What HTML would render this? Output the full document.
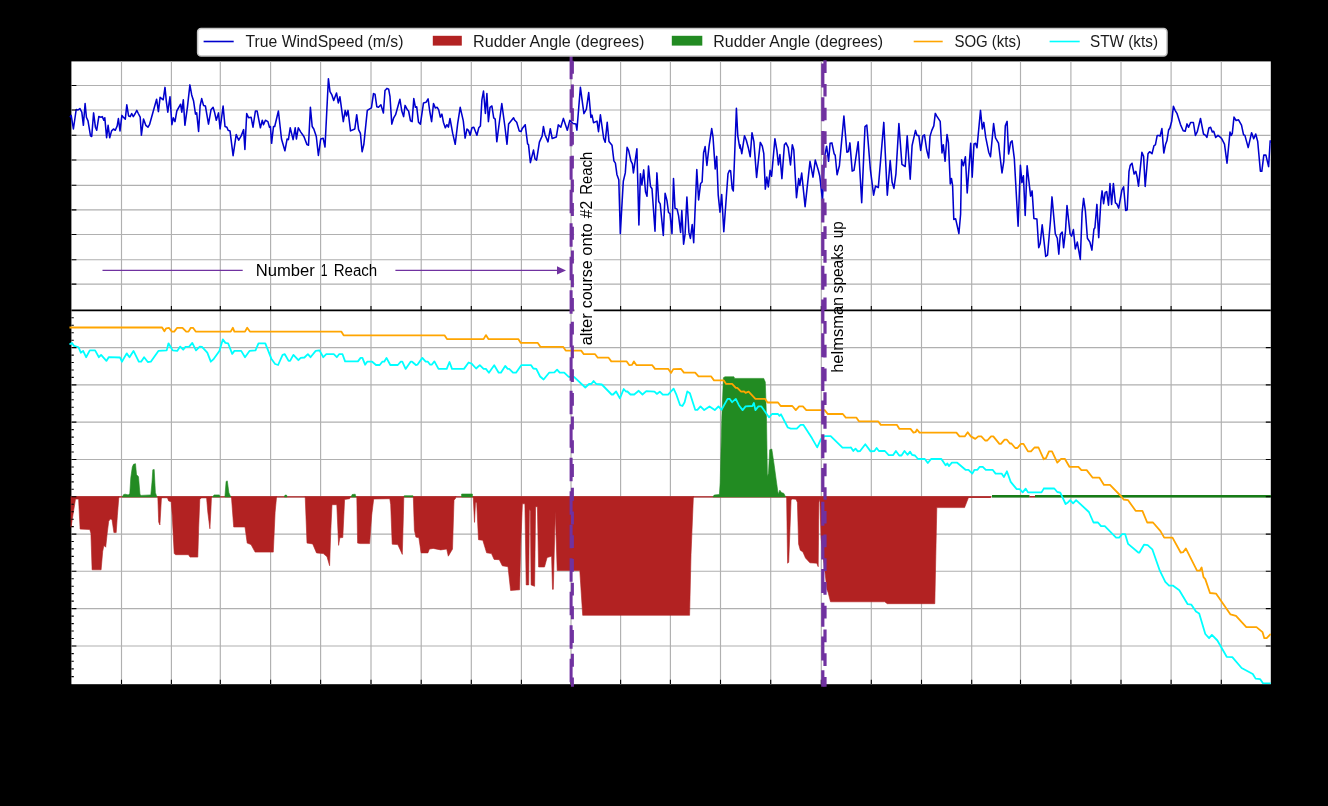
<!DOCTYPE html>
<html><head><meta charset="utf-8"><title>chart</title>
<style>
html,body{margin:0;padding:0;background:#000;}
body{width:1328px;height:806px;overflow:hidden;position:relative;font-family:"Liberation Sans",sans-serif;}
svg{position:absolute;left:0;top:0;}
text{font-family:"Liberation Sans",sans-serif;}
</style></head><body>
<svg width="1328" height="806" viewBox="0 0 1328 806">
<rect x="0" y="0" width="1328" height="806" fill="#000"/>
<filter id="soft" x="0" y="0" width="1328" height="806" filterUnits="userSpaceOnUse"><feGaussianBlur stdDeviation="0.5"/></filter>
<g filter="url(#soft)">
<rect x="0" y="0" width="1328" height="806" fill="#000"/>
<rect x="71.4" y="61.4" width="1199.4" height="622.8" fill="#fff"/>
<path d="M121.5 61.4V684.2M171.4 61.4V684.2M220.3 61.4V684.2M270.6 61.4V684.2M320.6 61.4V684.2M371 61.4V684.2M421.2 61.4V684.2M471.3 61.4V684.2M521.4 61.4V684.2M571 61.4V684.2M620.6 61.4V684.2M670.4 61.4V684.2M720.5 61.4V684.2M770.7 61.4V684.2M821.3 61.4V684.2M871.3 61.4V684.2M921.5 61.4V684.2M971.7 61.4V684.2M1020.5 61.4V684.2M1070.9 61.4V684.2M1121 61.4V684.2M1171.1 61.4V684.2M1221.3 61.4V684.2M71.4 85.5H1270.8M71.4 110H1270.8M71.4 135.3H1270.8M71.4 160H1270.8M71.4 185.3H1270.8M71.4 209.9H1270.8M71.4 234.5H1270.8M71.4 259.7H1270.8M71.4 284.1H1270.8M71.4 347.6H1270.8M71.4 384.9H1270.8M71.4 422.1H1270.8M71.4 459.5H1270.8M71.4 496.8H1270.8M71.4 534.1H1270.8M71.4 571.2H1270.8M71.4 608.6H1270.8M71.4 646H1270.8" stroke="#b0b0b0" stroke-width="1.15" fill="none"/>
<g id="data" fill="none" stroke-linejoin="round" stroke-linecap="butt">
<clipPath id="cp"><rect x="69" y="61.4" width="1201.9" height="622.8"/></clipPath>
<g clip-path="url(#cp)">
<path d="M70 117.2L71.2 115.4L73.4 129L76.2 109.5L78 110L79.9 108.5L81.8 112.2L83.4 125.3L85.1 103.5L86.4 117.2L88 120.9L90.5 135.9L91.7 136.5L93.6 112.9L95.4 127.2L96.7 130.3L98.8 116.6L101 117.2L102.3 116.6L103.8 120.3L104.8 117.8L106.6 137.7L108.1 125.3L109.7 137.7L111.6 130.9L113.5 129L115.3 130.3L117.2 125.9L118.4 118.5L120 130.9L121.9 115.4L123.4 117.2L125.3 119.1L126.8 104.8L128.6 116L130.2 116.6L131.7 113.5L133.3 116.6L135.2 113.5L136.8 110.4L138.3 113.5L140.2 117.2L141.4 135.2L143.5 119.1L145.8 125.3L148 127.2L149.5 124.7L156.6 99.2L158.4 111.6L160.1 97.3L163.2 99.8L165 87.4L166.3 101.1L167.8 112.2L170 96.7L171.9 124.7L173.3 117.8L175 121.6L176.8 111L180.6 104.2L181.8 112.2L183.3 99.8L184.9 125.3L187.4 107.3L189.9 84.9L191.7 94.9L193.6 101.1L195.5 114.1L196.7 112.9L198.6 131.5L200.1 106L201.7 98.6L203.5 105.4L205.4 106L208.5 124.1L211 109.8L213.1 107.3L214.7 112.9L216.3 120.3L218.5 112.9L220.1 129L223.1 106L225 126.5L226.9 127.2L228.1 130.3L230 130.9L233.1 155.7L236.2 134.6L238.7 140.2L241.2 135.9L243.6 129.6L244.9 149.5L246.7 113.5L248.6 117.8L251.1 117.2L253 127.2L255.4 111L257.1 111L260.4 127.8L262.3 120.3L263.5 124.7L265.4 120.3L267.9 121.6L269.5 127.2L270.4 126.5L271.6 143.3L273.5 126.5L274.7 126.5L278.4 111L281.5 139L284.9 150.8L287.1 139L288.4 139.6L290.2 127.8L293.1 139.6L295.2 127.8L296.4 139L298.3 127.8L300.8 132.1L303.9 136.5L307 144.6L308.5 145.2L310.4 107.3L312.2 126.5L313.8 129L316.3 136.5L318.4 155.5L320.7 139L323.2 138.3L325 147L328.4 78.7L330 91.7L331.9 94.9L333.7 100.4L336.5 93L338.3 102.9L339.9 96.7L343.3 121.6L345.2 110.4L346.5 116L348 110.4L350.5 130.9L354.8 129L356.7 114.7L358.6 129.6L360.4 133.4L362.1 151.8L363.8 144.6L367.3 110.4L371.4 107.9L373.5 93.6L375 94.2L376.8 106.7L378.5 107.3L380.9 104.8L383.4 112.9L385 90.5L386.9 88.4L388.7 89.3L390 96.7L391.8 124.1L393.7 117.8L395.6 114.7L399.9 99.2L401.8 111L403.6 116.6L405.1 105.4L407.4 109.8L408.6 111L410.5 120.9L412.1 121.6L413.8 98.6L415.4 107.3L416.7 106.7L418.5 122.2L420.4 124.1L423.5 102.9L426 102.3L428.1 98.8L429.7 111L431.6 121.6L433.5 103.5L435.3 107.9L437.2 107.3L438.7 109.8L440.3 117.2L441.9 114.1L443.4 122.2L445.3 127.8L446.9 124.7L448.4 127.2L450 118.5L452.7 133.4L455.2 144.3L457.7 123.4L460.2 107.3L463.3 120.9L465.1 138.1L467 129L468.5 130.3L470.1 135.2L472 127.8L473.8 127.2L476.9 135.2L478.8 127.8L480.4 125.9L481.9 99.8L483.5 91.1L485.4 113.5L486.9 93.6L488.4 121.6L490 107.3L491.9 106L493.7 117.8L495.2 119.1L496.8 141.8L501.8 103.5L504.9 126.5L507 144.3L508.6 124.1L513.6 117.8L514.8 120.3L516.7 122.2L519.2 130.9L521.1 131.5L522.3 128.4L525.2 124.7L527.6 143.9L528.5 144.6L530.4 162.6L533.5 150.1L535 158.8L536.6 160.1L539.4 142.1L542.2 135.9L543.4 126.5L545 134.7L548 141.9L550.3 128.7L552.2 138.5L556.3 137L558.3 124.9L560.8 127.2L563.4 118.4L567.3 130.2L569.8 120.4L572.9 123.4L575.9 123.9L576.9 130.2L580.4 87.3L583.9 113.6L586.4 109.1L588.7 92.5L590.9 117.4L592 115.1L593.5 122.7L597 121.1L598.5 131.7L600.4 114.8L603.7 138.5L605.2 142.2L607.2 122.3L609 141.5L612 145.2L613.9 160.9L615.4 163.1L616.9 174.4L618.8 179.7L620.3 233.6L623.3 181.2L625.3 172.9L627.1 147.3L628.6 150.3L630.9 160.9L632.4 163.9L633.4 172.9L636.9 148.8L638.9 224.9L640.4 173.7L641.9 185L643.7 169.9L645.5 191.7L647 196.3L648.5 166.1L650.5 186.5L652 188.7L655 231.2L656.9 172.9L658.7 201.5L660.2 203.8L663.3 235.4L665.1 193.3L667 200.8L668.5 212.5L670 213.6L672 233.6L673.5 178.5L675 208.3L677.1 209.1L678.6 215.8L680.6 232.4L681.8 210.6L683.6 244.2L685.1 233.9L686.9 197L688.9 232.4L690.4 238.4L692.2 224.6L693.7 242.7L696.8 169.5L698.6 200L700.6 183.5L702.1 182L703.6 152.6L705.1 146.6L706.9 165.4L709.2 145.1L711.7 128.6L713 136.8L715.2 168.9L716.7 156.4L718.2 194.8L720 212.1L721.7 194.5L723.8 231.7L728 173.7L729.5 170.4L730.6 170.7L732.2 188.7L733.3 191L736.4 108.3L737.8 136L739.3 145.1L739.9 148.1L740 144.7L741.8 153.7L744.5 135.7L746.3 140.2L748.3 147.7L750.2 156.7L752 132.7L753.9 141.7L756.6 177.5L760.3 142.4L762.3 146.2L763.8 153.7L765.3 189.1L766.8 177.1L768.3 186.9L770.1 170.3L771.6 176.3L774.9 138.7L776.9 150.7L778.4 165L779.9 154.5L781.9 178.6L784.4 144.7L785.9 142.9L788.2 147.7L790.5 165L792.3 144.7L793.8 150L796.5 197.7L798.7 178.6L799.8 185.4L801.7 173L805.1 206.7L810 161.3L813 177.1L815.3 160.1L818.3 170.3L819.8 176.3L822.5 200.4L824.3 158.3L826.6 146.2L828.6 161.3L830.1 143.2L831.9 142.9L834.1 153.7L835.2 155.2L837.1 174.8L839.4 165.8L843.9 116.1L846.9 152.2L848.4 151.5L849.9 142.9L852.2 171.1L854 170.3L858.2 141.7L861.7 202.7L865 126.6L866.8 125.1L870.3 168.8L873.6 195.2L875.5 186.1L878.3 187.6L883.8 122.4L887.3 195.2L890.2 160.5L892.1 182.3L893.9 188.4L895.9 174.1L898.9 123.6L901.9 164.3L905.2 166.5L907.2 135.7L910.2 179.3L912.1 145.5L915.5 130.4L917 135.4L918.8 135.4L920.7 150.4L923 135.7L924.5 134.9L926.7 150L928.7 158L930 136.4L931.8 130.4L933.8 125.9L935.3 113.4L936.8 116.1L940.2 121.4L942 153L943.3 144.7L945.1 161.3L947 134.5L948.4 142.4L950.3 183.9L951.5 178.6L952.6 185.4L953.8 219.5L955.6 218.7L958.9 233.5L960.6 214.2L961.6 159.8L963.4 165.8L965.4 156.7L967.2 192.9L970.7 143.2L972.2 177.1L974 143.9L975.6 143.2L977 147.7L980.5 110.4L982.3 128.9L983.8 122.4L985.7 137.2L988.7 152.2L990.5 156.7L993.6 123.6L995.5 137.9L998.5 143.2L1002 173L1003.8 161.3L1005.3 125.9L1007.1 121.4L1008.6 154L1010.6 142.4L1012.1 140.9L1014.3 158.3L1018.1 226.3L1020.4 165.3L1021.9 182.6L1023.4 175.8L1025.2 215.4L1027.1 165.7L1030.6 196.1L1032.1 190.9L1033.9 218.4L1036.9 219L1038.7 247.7L1040.2 243.6L1042.2 224.8L1045.7 256.4L1047.5 255.2L1050.5 220.2L1052 196.9L1055.3 233.8L1057.3 238.3L1058.8 254.1L1060.3 234.5L1062.2 232L1063.6 247.7L1065.5 230.8L1067 205.5L1070.1 233.8L1071.6 236.1L1073.4 229.6L1075.3 248.9L1077.3 242.1L1080.3 259.4L1082.1 212.7L1083.6 198.4L1085.4 211.2L1087.4 238.3L1089.9 242.1L1091.9 250.1L1093.9 229.3L1094.9 227.8L1096.9 204.4L1098.7 237.6L1100.9 200.7L1102.1 190.9L1103.6 203.7L1105.2 192.4L1106.7 191.6L1108.5 205.2L1110 183.5L1111.6 204.5L1113.4 183.5L1115.4 202.9L1116.8 203.9L1118.7 208.2L1121.9 190L1123.6 186.8L1125.7 210.5L1127.2 209.7L1129 171.3L1130.3 165.2L1132 163.2L1134.1 174L1135.8 171.3L1137.1 176.7L1138.5 186.2L1141.9 152.3L1143.6 156.4L1145.2 186.5L1148 153.7L1149.6 151.7L1152 153.7L1154 145.6L1155.4 144.9L1157.2 135.4L1158.8 135.4L1160.1 136.1L1161.9 128.6L1163.8 153L1165.6 144.2L1166.9 140.8L1168.6 130L1169.9 128L1171.7 121.2L1173.4 106.3L1175.1 110.3L1177.1 113.7L1180.5 124.6L1183.2 130.7L1185.2 131.3L1187 123.9L1188.6 127.3L1190.6 122.5L1193.4 122.5L1195.4 135.4L1197.4 131.3L1200.5 118.5L1203.5 134L1205.6 135.4L1206.9 137.4L1208.9 128L1210.6 127.3L1212.3 132L1213.7 131.3L1215.7 137.4L1218 135.4L1219.8 136.8L1221.8 138.8L1224.5 144.2L1227 163.2L1230 132L1231.3 135.4L1232.3 133.4L1234 117.1L1236.1 120.5L1238.5 119.8L1241.5 125.2L1243.5 134.7L1244.9 135.4L1248.2 147.6L1251.6 132.7L1253.7 138.8L1255.7 134L1257.7 141.5L1260.4 171.3L1261.8 171.3L1263.8 155.1L1265.9 155.1L1268.6 166.6L1270.2 140.8L1271 142.9" stroke="#0000cd" stroke-width="1.55"/>
<path d="M71.4 496.9H990.7" stroke="#b22222" stroke-width="1.2"/>
<path d="M71 496.9L71 496.4L71 527.3L75.5 499.1L78.6 499.1L80.1 529.1L89.8 529.5L90.9 533.3L92.1 569.8L101.1 569.8L102.7 551.4L103.9 545.4L105.7 547.2L107.2 533.3L108.7 521.3L110.2 519L112 519.5L113.9 532.6L116.2 532.6L117.4 515.2L118.9 496.4L118.9 496.9ZM157.8 496.9L157.8 496.4L158.7 522L159.9 525L161.4 498.7L162.1 497.8L167.4 497.8L168.6 500.9L171.2 501.7L172.2 515.2L174.2 553.6L175.7 554.7L188.5 554.7L190 557.1L197.8 557.1L198.7 527.3L199.8 499.4L201.3 497.9L206.6 497.9L207.8 512.2L209.9 528.8L210.8 512.2L211.5 496.4L211.5 496.9ZM231.4 496.9L231.4 496.4L233.7 527L245 527L247.2 543.1L251 544.6L255.1 552.1L273.3 552.1L275.1 512.2L276.6 496.4L276.6 496.9ZM305.2 496.9L305.2 496.4L307 543.1L312.7 543.9L316.5 552.9L323.3 553.6L327 556.7L329.6 565.7L330.8 530.3L332 504.7L336.8 504.7L338.6 545.4L339.8 537.8L342.8 537.5L344.6 499.4L349.6 498.7L350.4 496.4L350.4 496.9ZM356.8 496.9L356.8 496.4L357.6 543.1L360.2 543.6L369.6 543.6L371.7 515.2L373.7 499L389.8 498.7L390.7 504.7L392.2 544.2L397.8 544.6L402.3 554.4L403.4 515.2L403.8 496.4L403.8 496.9ZM413.3 496.9L413.3 496.4L414.4 530.3L415.9 537.1L418.9 537.8L421.1 552.9L427.9 552.9L429.4 549.1L433.2 548.4L440.7 549.9L446.7 549.1L448.3 556.2L452.5 549.1L454 500.2L455.8 497.9L455 497.5L456 496.3L456 496.9ZM473.2 496.9L473.2 496.3L474.5 522.4L475.5 502.4L476.7 502.4L478.5 539.7L482.8 540.3L486.6 552.8L491.5 553.6L494.1 559.4L499.3 559.7L502.3 565.8L508 566.7L510.6 590.5L519.6 589.8L521 537.1L522.4 503.8L524.9 503.8L526.2 584.9L528.7 584.9L529.4 509.3L530.4 511.1L531.1 584.9L534.6 586.3L535.6 506.7L537.4 506.7L538.6 567L544.5 567L547.1 557.6L551.6 556.2L552.5 589.3L553.3 589.3L555.3 511.1L557.2 570.5L579.8 570.5L582.7 615.3L689.6 615.3L691 554.5L693.4 496.3L693.4 496.9ZM786.6 496.9L786.6 496.3L787.6 563.2L788.7 562.3L791.1 499.8L792.5 498.9L796 499.2L797.4 502.4L798.6 544.1L800.3 550.2L802.9 551.9L805.5 558L809.9 562.8L816.8 563.2L818.2 566.7L818.9 502.4L819.9 498.9L821 537.1L826.9 589.3L828.2 592.7L830.5 601.8L884.7 601.8L887.3 603.7L934.8 603.7L936.8 507.6L964.6 507.6L968.5 497.5L990.7 497.5L990.7 496.3L990.7 496.9Z" fill="#b22222" stroke="#b22222" stroke-width="0.6"/>
<path d="M122.2 496.9L122.2 496.9L123.7 494.5L125.2 494.2L128.3 494.9L129.8 493.4L130.8 477.6L132.3 467L133.5 464.3L135.5 463.7L136.5 474.6L138.5 476.8L140 494.5L141.1 495.4L150.8 494.9L152 482.1L152.8 469.8L154.2 469.5L155.4 492.7L156.9 496.9L156.9 496.9ZM212.6 496.9L212.6 496.9L214.1 494.9L219.4 494.9L220.1 496.9L220.1 496.9ZM224.9 496.9L224.9 496.9L226.1 481.4L227.3 480.9L228.9 492.7L230.7 496.9L230.7 496.9ZM284.4 496.9L284.4 496.9L285 495.1L286.5 495.1L287.1 496.9L287.1 496.9ZM351.1 496.9L351.1 496.9L352.2 494.5L355.2 494.2L355.9 496.9L355.9 496.9ZM404.3 496.9L404.3 496.9L404.3 495.7L412.9 495.7L412.9 496.9L412.9 496.9ZM461.6 496.9L461.6 496.6L461.6 494L472.4 494L472.4 496.6L472.4 496.9ZM712.9 496.9L712.9 496.9L714.2 495L719.4 494.5L720.2 482.9L721.8 418.4L723.4 377.7L725 376.8L733.9 376.8L734.7 378.4L763.7 378.4L765.3 382.1L766.5 418.4L767.4 476.5L768.5 473.2L769.7 449.8L771.8 449L774.2 465.2L776.6 482.9L778.2 494.2L779.8 490.2L781.5 492.6L783.9 493.4L785.5 496.9L785.5 496.9Z" fill="#228b22" stroke="#228b22" stroke-width="0.6"/>
<path d="M992 496.2H1029.5M1035 496.2H1271" stroke="#127c12" stroke-width="2.6"/>
<path d="M1029.5 496.8H1035" stroke="#b22222" stroke-width="1.6"/>
<path d="M69.5 327.5L162.1 327.5L164.4 331.3L166.2 328.3L168.9 327.8L171.9 331.6L174.2 331.6L177.2 327.8L182.5 327.8L186.2 331.6L188.5 331.6L190.8 327.8L193 327.8L195.7 331.6L230.7 331.6L232.9 327.8L234.4 331.6L245 331.6L247.2 327.8L249.9 331.6L265.3 331.6L341.3 331.6L343.6 335.3L444.5 335.3L447 339.1L460.3 339.1L483.6 339.1L485.9 335.1L488.4 339.1L518.3 339.1L520.8 342.9L537.8 342.9L540.4 346.8L563.1 346.8L565.7 350.6L581.2 350.6L583.8 354.2L595.1 354.2L597.8 357.7L608.6 357.7L611.3 361.4L626.7 361.4L629.4 365.2L632 364.9L633.9 361.4L636.5 365.2L652.3 365.2L655 368.9L655.3 368.8L668.1 368.8L671.1 372.9L673.3 369.1L680.9 368.8L683.9 372.6L695.2 372.6L698.5 376.3L711 376.3L714 380.4L723.8 380.4L726.1 383.9L732.1 383.9L735.8 387.9L737.3 387.9L741.1 391.7L744.1 391.4L745.6 392.9L748.6 391.7L755.4 398.9L765.2 398.9L767.5 402.5L778 402.5L780.7 406L792.3 406L795.8 410.1L799.1 406.4L802.9 406.4L806.3 410.1L824.7 410.1L827.7 414L842.8 414L845.8 417.6L850 417.6L856.3 417.6L858.9 421.3L878.1 421.3L880.8 424.9L897 424.9L899.5 428.9L910.5 428.9L913.5 432.6L915.5 432.2L917 429.5L919.5 432.6L956.4 432.6L959.5 436.4L964.7 436.4L967.7 432.2L970.8 436.4L975.3 438.9L978.3 436.4L981.3 436.4L985.1 440.5L987.3 440.5L991.1 436.4L993.3 436.4L999.4 443.9L1000.9 443.9L1004.6 439.7L1006.9 439.7L1009.9 443.5L1011.4 443.5L1015.2 448L1017.4 448L1020.9 443.9L1023.5 443.9L1028 451.4L1031 451.4L1034.5 447.5L1038.5 447.5L1043.8 459.3L1043.8 458.8L1046 458.1L1049 451.3L1052 451.3L1057.3 462.6L1061.1 458.8L1064.8 458.8L1069.4 466.8L1078.4 466.8L1081.4 470.1L1086.7 470.1L1092.7 477.7L1099.5 477.7L1104 484.9L1110 484.9L1121.3 496.5L1123.6 499.5L1128.1 500.2L1135.6 510.8L1142.4 510.8L1147.2 522.5L1153 522.5L1160.5 531.1L1164.2 537.6L1172.5 537.6L1180.8 552.7L1183.1 552.2L1185.8 548.4L1197 570.7L1199.8 570.7L1201.6 567.5L1203.5 577.2L1205.3 579.1L1210 593L1216 593.6L1230.5 614.4L1236 615.9L1246.3 627.1L1256.5 627.1L1262.5 632.1L1264.3 638.2L1266.7 638.2L1270.8 634" stroke="#ffa500" stroke-width="1.8"/>
<path d="M69.5 344.4L71.8 342.9L74 345.9L78.6 347.4L80.8 352.7L83.1 350.9L86.1 357.2L89.8 350.4L95.1 350.4L98.9 357.2L101.1 354.9L106.4 360.9L108.7 357.2L120 357.5L121.9 361.7L126.7 353.4L129.5 357.2L133.5 350.9L138.8 361.7L141.1 361.7L144.1 357.2L147.8 362L150.8 361.7L158.4 350.9L166.7 350.4L168.5 343.3L172.7 350.4L177.2 350.9L180.2 346.6L183.2 349.7L185.5 346.9L189.2 346.6L192.3 342.9L196 350.4L199.8 346.6L202 346.9L207.3 352.7L210.8 361.7L213.3 359.4L219.4 350.9L222.8 339.4L225.4 342.9L228.1 343.3L232.2 353.9L234.4 350.9L241.2 350.9L245 357.2L249.5 350.9L255.5 350.4L258.5 343.3L265.3 343.3L267.5 348.9L271.3 358.7L275.1 364L278.1 365L282.6 354.9L284.8 354.2L288.6 360.9L290.1 360.9L293.4 354.9L298.4 360.2L300.7 357.9L304.4 357.5L307.9 354.2L310.5 357.2L315.7 350.9L319.5 350.4L323.3 357.2L326.3 354.2L333.8 354.2L336.8 357.2L339.1 354.2L342.5 354.2L345.1 361.4L357.9 361.4L360.6 357.9L362.4 357.9L365.1 364.7L367.2 361.7L372.2 361.7L376 365L379.7 365L382.3 361.7L384.2 361.7L386.5 357.9L390.3 365L397.8 365L400.8 361.7L402.3 361.7L405.6 368.9L410.6 361.7L412.1 361.7L415.9 365L417.4 364.7L422.3 357.9L425.7 361.7L427.9 361.7L430.2 364.7L431.7 364.7L434.4 361.4L438.5 368.9L446.7 368.9L449.5 362L452 368.9L456.5 368.9L464 368.9L468.6 362.5L471.6 363.7L476.1 368.5L479.8 365.2L483.6 368.9L485.9 368.9L488.9 372.7L494.2 365.2L498.7 372.7L500.9 372.7L505.2 365.9L507.7 368.9L509.2 368.9L513 372.7L516 372.7L521.3 365.2L531.1 365.2L533.3 368.5L536.3 368.9L540.1 376.5L543.6 379.5L549.1 372.7L554.4 372.4L557.1 369.7L559.7 372.7L564.2 372.7L568.7 376.9L574 376.9L585.3 387.5L589 384L591.3 384L593.6 381L596.3 384L601.8 384.5L611.6 394.5L613.1 394.5L616.1 391.5L619.9 398.3L623.7 389L625.9 391.5L627.4 391.5L630.5 394.5L634.2 394.5L638.7 390.8L642.5 394.5L646.3 391.1L654.5 391.7L656.8 393.9L659.8 391.7L662.8 394.7L668.1 394.7L673.6 388.7L676.4 394.7L680.1 405.2L682.4 406L684.6 402.2L687.3 391.4L689.9 393.2L695.2 409.8L697.4 409.8L700.5 406.4L704.2 410.1L709.5 406.4L714.8 410.1L718.5 406.4L721.5 409.8L727.6 398.9L729.8 398.9L732.1 402.2L735.8 398.9L738.9 405.2L742.6 410.1L745.6 406.4L752.4 406L753.9 403L755.4 410.1L758.4 406.4L761.4 406.4L769 417.3L772 414L778 414L779.5 415.8L781 414.3L787.8 427.5L790.8 428.6L796.8 428.6L800.6 424.8L803.3 424.8L811.9 438.1L817.2 447.4L820.9 439.1L824.7 436.1L830.7 436.1L842.5 447.7L850 447.7L851 447.5L853.3 451L855.5 448.7L857.8 451.4L860.1 451L865.3 444.2L870.6 451.4L874.4 451L876.6 448L878.9 451L884.9 451L888.7 455.1L893.2 455.1L895.9 451L899.2 455.5L901.5 455.5L904.5 451L907.5 454.8L910.1 451.7L912 454.8L915 455.5L918 459L924.8 459L927.8 463L931.1 459L941.4 459L945.6 465.3L947.4 463.5L948.9 466.1L951.9 462.7L957.2 462.7L965.5 469.8L968.5 469.8L972.3 473.6L974.5 469.8L977.5 469.8L979.8 466.8L982.8 466.8L985.8 469.8L992.6 469.8L995.6 473.6L1001.6 473.6L1003.9 477L1006.9 471.3L1010.7 481.9L1016.7 489.1L1019.7 489.1L1022.7 492.4L1025.7 488.6L1028 492.4L1041.5 492.4L1043.8 488.6L1043.8 488.5L1054.3 488.5L1057.3 492L1060.3 492.7L1065.6 504L1067.9 502.5L1070.1 500.2L1073.1 503.3L1076.1 500.2L1088.9 512L1093.5 522.5L1098 522.5L1101 526.1L1104.8 526.1L1116.1 537.6L1119.1 537.6L1122.1 534.1L1125.1 534.1L1128.1 543.9L1138.6 552.7L1139.3 552.7L1144 544.7L1147.7 545.2L1152.3 549.3L1159.8 570.7L1165.3 581.9L1169.1 585.6L1172.8 585.6L1179.3 590.2L1187.7 604.2L1191.4 604.7L1196 611.6L1199.2 613.5L1205.3 634L1209.1 638.2L1211.9 634.9L1217.4 640.5L1226.7 656.8L1232.3 657.2L1241.6 668L1252.8 674L1255.6 678.6L1260.2 679.2L1263 683.3L1270.8 683.3" stroke="#00ffff" stroke-width="1.8"/>
</g></g>
<path d="M71.4 85.5h5M71.4 110h5M71.4 135.3h5M71.4 160h5M71.4 185.3h5M71.4 209.9h5M71.4 234.5h5M71.4 259.7h5M71.4 284.1h5M71.4 347.6h5M1270.8 347.6h-5M71.4 384.9h5M1270.8 384.9h-5M71.4 422.1h5M1270.8 422.1h-5M71.4 459.5h5M1270.8 459.5h-5M71.4 496.8h5M1270.8 496.8h-5M71.4 534.1h5M1270.8 534.1h-5M71.4 571.2h5M1270.8 571.2h-5M71.4 608.6h5M1270.8 608.6h-5M71.4 646h5M1270.8 646h-5M71.4 317.8h2.4M71.4 325.3h2.4M71.4 332.7h2.4M71.4 340.2h2.4M71.4 355.1h2.4M71.4 362.5h2.4M71.4 370h2.4M71.4 377.4h2.4M71.4 392.3h2.4M71.4 399.8h2.4M71.4 407.2h2.4M71.4 414.7h2.4M71.4 429.6h2.4M71.4 437.1h2.4M71.4 444.5h2.4M71.4 452h2.4M71.4 467h2.4M71.4 474.4h2.4M71.4 481.9h2.4M71.4 489.3h2.4M71.4 504.3h2.4M71.4 511.7h2.4M71.4 519.2h2.4M71.4 526.6h2.4M71.4 541.5h2.4M71.4 548.9h2.4M71.4 556.4h2.4M71.4 563.8h2.4M71.4 578.7h2.4M71.4 586.2h2.4M71.4 593.6h2.4M71.4 601.1h2.4M71.4 616.1h2.4M71.4 623.6h2.4M71.4 631h2.4M71.4 638.5h2.4M71.4 653.6h2.4M71.4 661.3h2.4M71.4 668.9h2.4M71.4 676.6h2.4M121.5 310.4v-4.5M121.5 684.2v-4.5M171.4 310.4v-4.5M171.4 684.2v-4.5M220.3 310.4v-4.5M220.3 684.2v-4.5M270.6 310.4v-4.5M270.6 684.2v-4.5M320.6 310.4v-4.5M320.6 684.2v-4.5M371 310.4v-4.5M371 684.2v-4.5M421.2 310.4v-4.5M421.2 684.2v-4.5M471.3 310.4v-4.5M471.3 684.2v-4.5M521.4 310.4v-4.5M521.4 684.2v-4.5M571 310.4v-4.5M571 684.2v-4.5M620.6 310.4v-4.5M620.6 684.2v-4.5M670.4 310.4v-4.5M670.4 684.2v-4.5M720.5 310.4v-4.5M720.5 684.2v-4.5M770.7 310.4v-4.5M770.7 684.2v-4.5M821.3 310.4v-4.5M821.3 684.2v-4.5M871.3 310.4v-4.5M871.3 684.2v-4.5M921.5 310.4v-4.5M921.5 684.2v-4.5M971.7 310.4v-4.5M971.7 684.2v-4.5M1020.5 310.4v-4.5M1020.5 684.2v-4.5M1070.9 310.4v-4.5M1070.9 684.2v-4.5M1121 310.4v-4.5M1121 684.2v-4.5M1171.1 310.4v-4.5M1171.1 684.2v-4.5M1221.3 310.4v-4.5M1221.3 684.2v-4.5" stroke="#000" stroke-width="1.1" fill="none"/>
<path d="M71.4 310.4H1270.8" stroke="#000" stroke-width="1.6" fill="none"/>
<g id="annot">
<rect x="574.3" y="165" width="19.3" height="181" fill="#fff"/>
<g stroke="#7030a0" stroke-width="3" fill="none">
<path d="M571.1 56V686.7" stroke-dasharray="23.5 10" stroke-dashoffset="0.2"/>
<path d="M572.4 60.8V686.7" stroke-dasharray="12.9 10.82"/>
<path d="M822.8 63.6V686.7" stroke-width="3.2" stroke-dasharray="24 9.7"/>
<path d="M825 60.2V686.7" stroke-width="3.2" stroke-dasharray="12.7 11.02"/>
</g>
<g stroke="#7030a0" stroke-width="1.3" fill="none">
<path d="M102.5 270.4H242.7M395.4 270.4H560"/>
</g>
<path d="M566 270.4l-9-4.2v8.4z" fill="#7030a0"/>
<!--TXT--><g transform="translate(592.0 345.3) rotate(-90)" font-size="16" fill="#000"><text x="0.02" y="0" textLength="31.98" lengthAdjust="spacingAndGlyphs">alter</text><text x="37.00" y="0" textLength="48.00" lengthAdjust="spacingAndGlyphs">course</text><text x="89.51" y="0" textLength="32.48" lengthAdjust="spacingAndGlyphs">onto</text><text x="126.99" y="0" textLength="17.44" lengthAdjust="spacingAndGlyphs">#2</text><text x="150.49" y="0" textLength="43.03" lengthAdjust="spacingAndGlyphs">Reach</text></g>
<g transform="translate(842.8 371.5) rotate(-90)" font-size="16" fill="#000"><text x="-1.31" y="0" textLength="76.02" lengthAdjust="spacingAndGlyphs">helmsman</text><text x="78.20" y="0" textLength="49.00" lengthAdjust="spacingAndGlyphs">speaks</text><text x="133.19" y="0" textLength="16.99" lengthAdjust="spacingAndGlyphs">up</text></g>
<g transform="translate(0 276.4)" font-size="16" fill="#000"><text x="255.70" y="0" textLength="59.00" lengthAdjust="spacingAndGlyphs">Number</text><text x="320.83" y="0" textLength="6.81" lengthAdjust="spacingAndGlyphs">1</text><text x="333.69" y="0" textLength="43.52" lengthAdjust="spacingAndGlyphs">Reach</text></g>
<!--/TXT-->
</g>
<g id="legend">
<rect x="197.6" y="28.4" width="969.4" height="27.5" rx="3.5" ry="3.5" fill="#fff" stroke="#c4c4c4" stroke-width="1.5"/>
<path d="M203.6 41.5H233.7" stroke="#0000cd" stroke-width="1.6"/>
<text x="245.5" y="46.6" font-size="16.6" textLength="158" lengthAdjust="spacingAndGlyphs" fill="#1a1a1a">True WindSpeed (m/s)</text>
<rect x="432.8" y="35.8" width="29" height="9.8" fill="#b22222"/>
<text x="473" y="46.6" font-size="16.6" textLength="171.4" lengthAdjust="spacingAndGlyphs" fill="#1a1a1a">Rudder Angle (degrees)</text>
<rect x="671.8" y="35.8" width="30.5" height="9.8" fill="#228b22"/>
<text x="713.2" y="46.6" font-size="16.6" textLength="170" lengthAdjust="spacingAndGlyphs" fill="#1a1a1a">Rudder Angle (degrees)</text>
<path d="M913.7 41.5H942.7" stroke="#ffa500" stroke-width="1.6"/>
<text x="954.4" y="46.6" font-size="16.6" textLength="66.6" lengthAdjust="spacingAndGlyphs" fill="#1a1a1a">SOG (kts)</text>
<path d="M1049.6 41.5H1079.7" stroke="#00ffff" stroke-width="1.6"/>
<text x="1090" y="46.6" font-size="16.6" textLength="68" lengthAdjust="spacingAndGlyphs" fill="#1a1a1a">STW (kts)</text>
</g>
</g></svg></body></html>
